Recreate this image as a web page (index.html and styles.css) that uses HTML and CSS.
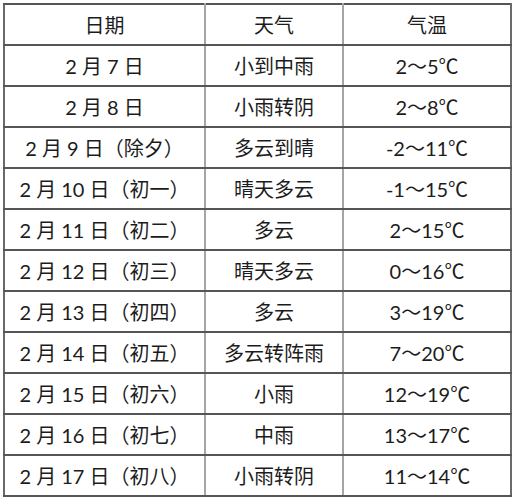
FILE: index.html
```html
<!DOCTYPE html>
<html lang="zh">
<head>
<meta charset="utf-8">
<link rel="stylesheet" href="styles.css">
</head>
<body>
<table class="weather">
  <colgroup>
    <col class="c-date">
    <col class="c-wx">
    <col class="c-temp">
  </colgroup>
  <tr><td>日期</td><td>天气</td><td>气温</td></tr>
  <tr><td>2 月 7 日</td><td>小到中雨</td><td>2～5℃</td></tr>
  <tr><td>2 月 8 日</td><td>小雨转阴</td><td>2～8℃</td></tr>
  <tr><td>2 月 9 日（除夕）</td><td>多云到晴</td><td>-2～11℃</td></tr>
  <tr><td>2 月 10 日（初一）</td><td>晴天多云</td><td>-1～15℃</td></tr>
  <tr><td>2 月 11 日（初二）</td><td>多云</td><td>2～15℃</td></tr>
  <tr><td>2 月 12 日（初三）</td><td>晴天多云</td><td>0～16℃</td></tr>
  <tr><td>2 月 13 日（初四）</td><td>多云</td><td>3～19℃</td></tr>
  <tr><td>2 月 14 日（初五）</td><td>多云转阵雨</td><td>7～20℃</td></tr>
  <tr><td>2 月 15 日（初六）</td><td>小雨</td><td>12～19℃</td></tr>
  <tr><td>2 月 16 日（初七）</td><td>中雨</td><td>13～17℃</td></tr>
  <tr><td>2 月 17 日（初八）</td><td>小雨转阴</td><td>11～14℃</td></tr>
</table>
</body>
</html>
```

FILE: styles.css
```css
html, body {
  margin: 0;
  padding: 0;
  background: #ffffff;
}

body {
  padding: 3px 0 0 3px;
  font-family: "Lato", "Noto Sans CJK SC", sans-serif;
  color: #1c1c1c;
}

.weather {
  border-collapse: collapse;
  table-layout: fixed;
  width: 507px;
  border: 2px solid #6a6a6a;
}

.c-date { width: 201px; }
.c-wx { width: 138px; }
.c-temp { width: 168px; }

.weather td {
  height: 39px;
  padding: 0;
  text-align: center;
  vertical-align: middle;
  font-size: 20px;
  line-height: 24px;
  white-space: nowrap;
  border-top: 2px solid #555555;
  border-bottom: 2px solid #555555;
  border-left: 2px solid #a5a5a5;
  border-right: 2px solid #a5a5a5;
}

.weather tr td:first-child { border-left-color: #6a6a6a; }
.weather tr td:last-child { border-right-color: #6a6a6a; }
```
